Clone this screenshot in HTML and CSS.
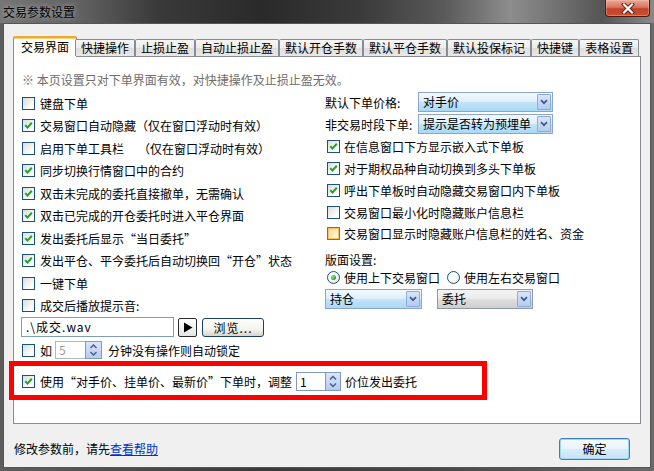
FILE: index.html
```html
<!DOCTYPE html>
<html lang="zh-CN">
<head>
<meta charset="utf-8">
<title>交易参数设置</title>
<link rel="stylesheet" href="styles.css">
</head>
<body>
<div class="window">
  <div class="titlebar">
    <span class="title">交易参数设置</span>
    <div class="close">
      <svg width="14" height="11" viewBox="0 0 14 11"><path d="M3 1.5 L11 9.5 M11 1.5 L3 9.5" stroke="#5a1a10" stroke-width="4" stroke-linecap="square"/><path d="M3 1.5 L11 9.5 M11 1.5 L3 9.5" stroke="#fff" stroke-width="2.2" stroke-linecap="square"/></svg>
    </div>
  </div>
  <div class="client">
    <div class="tabs">
      <div class="tab active">交易界面</div>
      <div class="tab">快捷操作</div>
      <div class="tab">止损止盈</div>
      <div class="tab">自动止损止盈</div>
      <div class="tab">默认开仓手数</div>
      <div class="tab">默认平仓手数</div>
      <div class="tab">默认投保标记</div>
      <div class="tab">快捷键</div>
      <div class="tab">表格设置</div>
    </div>
    <div class="panel">
      <div class="note">※ 本页设置只对下单界面有效，对快捷操作及止损止盈无效。</div>
      <div class="cols">
        <div class="col-left">
          <div class="row"><span class="cb"></span>键盘下单</div>
          <div class="row"><span class="cb on"><svg viewBox="0 0 11 11"><path d="M2.3 5.2 L4.4 7.6 L8.8 2.8"/></svg></span>交易窗口自动隐藏（仅在窗口浮动时有效）</div>
          <div class="row"><span class="cb"></span>启用下单工具栏<span class="paren-gap">（仅在窗口浮动时有效）</span></div>
          <div class="row"><span class="cb on"><svg viewBox="0 0 11 11"><path d="M2.3 5.2 L4.4 7.6 L8.8 2.8"/></svg></span>同步切换行情窗口中的合约</div>
          <div class="row"><span class="cb on"><svg viewBox="0 0 11 11"><path d="M2.3 5.2 L4.4 7.6 L8.8 2.8"/></svg></span>双击未完成的委托直接撤单，无需确认</div>
          <div class="row"><span class="cb on"><svg viewBox="0 0 11 11"><path d="M2.3 5.2 L4.4 7.6 L8.8 2.8"/></svg></span>双击已完成的开仓委托时进入平仓界面</div>
          <div class="row"><span class="cb on"><svg viewBox="0 0 11 11"><path d="M2.3 5.2 L4.4 7.6 L8.8 2.8"/></svg></span>发出委托后显示“当日委托”</div>
          <div class="row"><span class="cb on"><svg viewBox="0 0 11 11"><path d="M2.3 5.2 L4.4 7.6 L8.8 2.8"/></svg></span>发出平仓、平今委托后自动切换回“开仓”状态</div>
          <div class="row"><span class="cb"></span>一键下单</div>
          <div class="row"><span class="cb"></span>成交后播放提示音:</div>
          <div class="file-row">
            <div class="field">.\成交.wav</div>
            <div class="play"><svg width="10" height="11" viewBox="0 0 10 11"><path d="M1 0.5 L9.5 5.5 L1 10.5 Z" fill="#000"/></svg></div>
            <div class="btn-browse">浏览...</div>
          </div>
          <div class="lock-row">
            <span class="cb"></span>如
            <div class="spin spin-lock">
              <div class="spin-input disabled">5</div>
              <div class="spin-btn"><svg width="15" height="16" viewBox="0 0 15 16"><path d="M4.5 6 L7.5 3 L10.5 6 M4.5 10 L7.5 13 L10.5 10" fill="none" stroke="#4d6185" stroke-width="1.5"/></svg></div>
            </div>
            <span class="after-spin">分钟没有操作则自动锁定</span>
          </div>
        </div>
        <div class="col-right">
          <div class="combo-row">
            <span class="combo-label">默认下单价格:</span>
            <div class="combo hot wide"><span class="combo-text">对手价</span><span class="combo-arrow"><svg width="8" height="6" viewBox="0 0 8 6"><path d="M1 1.2 L4 4.2 L7 1.2" fill="none" stroke="#3d5a8c" stroke-width="1.7"/></svg></span></div>
          </div>
          <div class="combo-row second">
            <span class="combo-label">非交易时段下单:</span>
            <div class="combo hot wide"><span class="combo-text">提示是否转为预埋单</span><span class="combo-arrow"><svg width="8" height="6" viewBox="0 0 8 6"><path d="M1 1.2 L4 4.2 L7 1.2" fill="none" stroke="#3d5a8c" stroke-width="1.7"/></svg></span></div>
          </div>
          <div class="checks">
            <div class="rrow"><span class="cb on"><svg viewBox="0 0 11 11"><path d="M2.3 5.2 L4.4 7.6 L8.8 2.8"/></svg></span>在信息窗口下方显示嵌入式下单板</div>
            <div class="rrow"><span class="cb on"><svg viewBox="0 0 11 11"><path d="M2.3 5.2 L4.4 7.6 L8.8 2.8"/></svg></span>对于期权品种自动切换到多头下单板</div>
            <div class="rrow"><span class="cb on"><svg viewBox="0 0 11 11"><path d="M2.3 5.2 L4.4 7.6 L8.8 2.8"/></svg></span>呼出下单板时自动隐藏交易窗口内下单板</div>
            <div class="rrow"><span class="cb"></span>交易窗口最小化时隐藏账户信息栏</div>
            <div class="rrow"><span class="cb hotcb"></span>交易窗口显示时隐藏账户信息栏的姓名、资金</div>
          </div>
          <div class="layout-label">版面设置:</div>
          <div class="radio-row">
            <span class="radio on"></span><span class="radio-text">使用上下交易窗口</span>
            <span class="radio second-radio"></span><span>使用左右交易窗口</span>
          </div>
          <div class="combo-pair">
            <div class="combo hot small1"><span class="combo-text">持仓</span><span class="combo-arrow"><svg width="8" height="6" viewBox="0 0 8 6"><path d="M1 1.2 L4 4.2 L7 1.2" fill="none" stroke="#3d5a8c" stroke-width="1.7"/></svg></span></div>
            <div class="combo normal small2"><span class="combo-text">委托</span><span class="combo-arrow"><svg width="8" height="6" viewBox="0 0 8 6"><path d="M1 1.2 L4 4.2 L7 1.2" fill="none" stroke="#3d5a8c" stroke-width="1.7"/></svg></span></div>
          </div>
        </div>
      </div>
      <div class="adjust-row">
        <span class="cb on"><svg viewBox="0 0 11 11"><path d="M2.3 5.2 L4.4 7.6 L8.8 2.8"/></svg></span>使用“对手价、挂单价、最新价”下单时，调整
        <div class="spin spin-adjust">
          <div class="spin-input">1</div>
          <div class="spin-btn"><svg width="14" height="17" viewBox="0 0 14 17"><path d="M4 6.5 L7 3.5 L10 6.5 M4 10.5 L7 13.5 L10 10.5" fill="none" stroke="#4d6185" stroke-width="1.5"/></svg></div>
        </div>
        <span class="after-spin2">价位发出委托</span>
      </div>
    </div>
    <div class="footer">
      <span class="hint">修改参数前，请先<a class="help">查看帮助</a></span>
      <div class="btn-ok">确定</div>
    </div>
  </div>
  <div class="highlight"></div>
</div>
</body>
</html>
```

FILE: styles.css
```css
* { box-sizing: border-box; }
html, body { margin: 0; padding: 0; }
body {
  width: 654px;
  height: 471px;
  overflow: hidden;
  font-family: "Noto Sans CJK SC", "Noto Sans", sans-serif;
  font-size: 12px;
  color: #000;
  background: #3b3b3b;
}
.window {
  position: relative;
  width: 654px;
  height: 471px;
  display: flex;
  flex-direction: column;
  background: linear-gradient(90deg, #5e5e5e, #3a3a3a 40%, #4a4a4a 70%, #6a6a6a);
}
.titlebar {
  height: 23px;
  flex: none;
  display: flex;
  justify-content: space-between;
  align-items: flex-start;
  background: linear-gradient(90deg, #767676 0%, #626262 12%, #3a3a3a 24%, #2a2a2a 40%, #3a3a3a 55%, #5a5a5a 68%, #8d8d8d 78%, #6e6e6e 86%, #555 92%, #8a8a8a 100%);
}
.title {
  line-height: 23px;
  padding-left: 3px;
  color: #000;
  text-shadow: 0 0 5px rgba(255,255,255,.6);
}
.close {
  width: 45px;
  height: 17px;
  margin-right: 4px;
  border: 1px solid #4b1a11;
  border-top: none;
  border-radius: 0 0 4px 4px;
  background: linear-gradient(#e9a996 0%, #d8755f 45%, #c4412a 55%, #c9512f 100%);
  box-shadow: inset 0 0 0 1px rgba(255,210,190,.35);
  display: flex;
  align-items: center;
  justify-content: center;
}
.client {
  flex: 1;
  margin: 0 3px 3px;
  border: 1px solid #555;
  background: #f0f0f0;
  display: flex;
  flex-direction: column;
}
.tabs {
  display: flex;
  align-items: flex-end;
  height: 20px;
  margin: 12px 0 0 9px;
  position: relative;
  z-index: 1;
  flex: none;
}
.tab {
  height: 17px;
  padding: 0 5px;
  border: 1px solid #898c95;
  border-bottom: none;
  border-radius: 2px 2px 0 0;
  background: linear-gradient(#f6f6f6, #ececec 50%, #dfdfdf 51%, #e8e8e8);
  line-height: 16px;
  white-space: nowrap;
}
.tab.active {
  height: 21px;
  margin-bottom: -1px;
  margin-right: -2px;
  padding: 0 7px;
  background: #fff;
  border-top: 2px solid #f1a83a;
  box-shadow: inset 0 1px 0 #ffd16e;
  line-height: 18px;
}
.panel {
  flex: none;
  height: 368px;
  margin: 0 9px;
  border: 1px solid #898c95;
  background: #fff;
  padding: 0 8px;
}
.note {
  margin-top: 14px;
  height: 18px;
  line-height: 18px;
  color: #6d6d6d;
  white-space: nowrap;
}
.cols {
  display: flex;
  margin-top: 3px;
}
.col-left { width: 303px; flex: none; }
.col-right { flex: 1; }
.row {
  display: flex;
  align-items: center;
  height: 22.5px;
  white-space: nowrap;
}
.cb {
  width: 13px;
  height: 13px;
  flex: none;
  margin-right: 5px;
  border: 1px solid #1c5180;
  background: linear-gradient(135deg, #dcdcd7, #fff 80%);
  display: flex;
}
.cb svg { width: 11px; height: 11px; }
.cb svg path { fill: none; stroke: #21a121; stroke-width: 2; }
.cb.hotcb {
  border-color: #8a6f3c;
  background: linear-gradient(135deg, #f9d894, #fff3d8 80%);
  box-shadow: inset 0 0 0 1px #f7c25c;
}
.paren-gap { margin-left: 14px; }

.file-row {
  display: flex;
  align-items: center;
  height: 20px;
  margin-left: -1px;
}
.field {
  width: 153px;
  height: 20px;
  border: 1px solid #7f9db9;
  background: #fff;
  padding-left: 4px;
  line-height: 18px;
  letter-spacing: 1px;
}
.play {
  width: 19px;
  height: 19px;
  margin-left: 4px;
  border: 1px solid #2a2a2a;
  border-radius: 2px;
  background: linear-gradient(#fff, #e4e4e4);
  display: flex;
  align-items: center;
  justify-content: center;
}
.btn-browse {
  width: 62px;
  height: 19px;
  margin-left: 5px;
  border: 1px solid #1c3d66;
  border-radius: 3px;
  background: linear-gradient(#fff, #f3f3ef 60%, #d9d5cc);
  text-align: center;
  line-height: 17px;
  letter-spacing: 1px;
}
.lock-row {
  display: flex;
  align-items: center;
  height: 18px;
  margin-top: 4px;
  white-space: nowrap;
}
.spin { display: flex; flex: none; }
.spin-lock { height: 18px; margin-left: 3px; }
.spin-adjust { height: 19px; margin-left: 4px; }
.spin-input {
  border: 1px solid #7f9db9;
  border-right: none;
  background: #fff;
  padding-left: 3px;
  line-height: 16px;
}
.spin-lock .spin-input { width: 30px; }
.spin-adjust .spin-input { width: 29px; line-height: 17px; }
.spin-input.disabled { color: #9a9a9a; border-color: #a9b9cc; }
.spin-btn {
  border: 1px solid #7f9db9;
  background: linear-gradient(#dbe6fb, #b6caf2);
  display: flex;
  align-items: center;
  justify-content: center;
}
.spin-lock .spin-btn { width: 17px; }
.spin-adjust .spin-btn { width: 16px; }
.after-spin { margin-left: 6px; }
.after-spin2 { margin-left: 4px; }

.combo-row {
  display: flex;
  align-items: center;
  height: 20px;
  white-space: nowrap;
}
.combo-row.second { margin-top: 2px; }
.combo-label { width: 93px; flex: none; }
.combo {
  display: flex;
  height: 20px;
  border: 1px solid #8aa6cf;
  flex: none;
}
.combo.hot { background: linear-gradient(#f4faff 0%, #deeffb 48%, #c3e4f8 52%, #a9d8f4 100%); }
.combo.normal { background: linear-gradient(#f4f4f4 0%, #ebebeb 48%, #dedede 52%, #cfcfcf 100%); border-color: #8e97a6; }
.combo.wide { width: 135px; }
.combo.small1 { width: 97px; }
.combo.small2 { width: 96px; margin-left: 15px; }
.combo-text {
  flex: 1;
  padding-left: 4px;
  line-height: 18px;
  white-space: nowrap;
  overflow: hidden;
}
.combo-arrow {
  width: 14px;
  margin: 1px;
  border: 1px solid #8eabd9;
  border-radius: 1px;
  background: linear-gradient(#d9e5f8, #b6cbf0);
  display: flex;
  align-items: center;
  justify-content: center;
}
.checks { margin-top: 2px; }
.rrow {
  display: flex;
  align-items: center;
  height: 21.75px;
  white-space: nowrap;
}
.rrow .cb { margin-left: 2px; margin-right: 4px; }
.layout-label {
  margin-top: 6px;
  height: 18px;
  line-height: 18px;
}
.radio-row {
  display: flex;
  align-items: center;
  height: 18px;
  white-space: nowrap;
}
.radio {
  width: 13px;
  height: 13px;
  flex: none;
  border-radius: 50%;
  border: 1px solid #1c5180;
  background: radial-gradient(circle at 40% 40%, #fff 30%, #dcdcd7);
  margin-left: 2px;
  margin-right: 4px;
  display: flex;
  align-items: center;
  justify-content: center;
}
.radio.on::after {
  content: "";
  width: 5px;
  height: 5px;
  border-radius: 50%;
  background: radial-gradient(circle at 35% 35%, #9ee29e, #21a121 70%);
}
.radio-text { width: 96px; flex: none; }
.second-radio { margin-left: 7px; }
.combo-pair {
  display: flex;
  margin-top: 2px;
}
.adjust-row {
  display: flex;
  align-items: center;
  height: 20px;
  margin-top: 12px;
  white-space: nowrap;
}
.footer {
  flex: 1;
  display: flex;
  align-items: center;
  justify-content: space-between;
  padding: 6px 20px 0 10px;
}
.help {
  color: #0033cc;
  text-decoration: underline;
}
.btn-ok {
  width: 71px;
  height: 22px;
  border: 1px solid #3c7fb1;
  border-radius: 3px;
  background: linear-gradient(#f5fbfe, #e8f4fb 50%, #d7ecf8 51%, #c9e4f6);
  box-shadow: inset 0 0 0 1px #9fd6f5;
  text-align: center;
  line-height: 20px;
}
.highlight {
  position: absolute;
  left: 9px;
  top: 361px;
  width: 478px;
  height: 39px;
  border: 5px solid #ff0000;
  pointer-events: none;
}
```
